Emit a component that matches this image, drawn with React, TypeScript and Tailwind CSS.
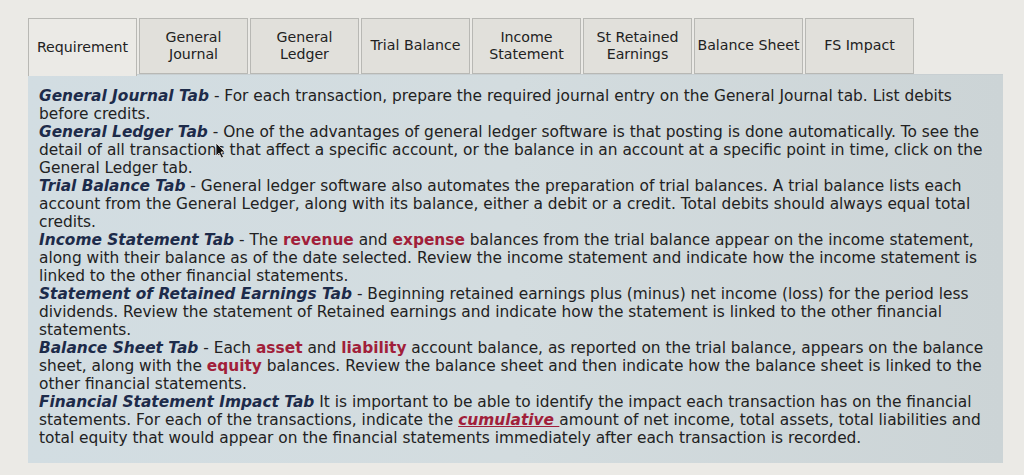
import React from "react";

const tabs: { label: React.ReactNode; active?: boolean }[] = [
  { label: "Requirement", active: true },
  { label: <>General<br />Journal</> },
  { label: <>General<br />Ledger</> },
  { label: "Trial Balance" },
  { label: <>Income<br />Statement</> },
  { label: <>St Retained<br />Earnings</> },
  { label: "Balance Sheet" },
  { label: "FS Impact" },
];

const H = ({ children }: { children: React.ReactNode }) => (
  <span className="font-bold italic text-[#1d2b4a]">{children}</span>
);
const R = ({ children }: { children: React.ReactNode }) => (
  <span className="font-bold text-[#a11f3a]">{children}</span>
);

export default function App() {
  return (
    <div
      className="w-[1024px] h-[475px] bg-[#ebeae6] overflow-hidden pt-[18px] pl-[28px]"
      style={{ fontFamily: '"DejaVu Sans", Verdana, sans-serif' }}
    >
      <div className="flex gap-[2px] relative z-10">
        {tabs.map((t, i) => (
          <div
            key={i}
            className={
              "w-[109px] flex items-center justify-center text-center text-[14.2px] leading-[17px] text-[#222] border border-[#b8b8b4] " +
              (t.active
                ? "h-[58px] bg-[#ebeae6] border-b-0"
                : "h-[56px] bg-[#e1e0db]")
            }
          >
            <span className="-mt-[1px]">{t.label}</span>
          </div>
        ))}
      </div>
      <div className="relative w-[975px] h-[389px] -mt-[2px] bg-gradient-to-r from-[#d2dde2] via-[#d3dcdf] to-[#ccd4d6] border-t border-[#c8cfd2] pl-[11px] pt-[12px] text-[15.4px] leading-[18px] text-[#222] whitespace-nowrap">
        <div>
          <H>General Journal Tab</H> - For each transaction, prepare the required journal entry on the General Journal tab. List debits
          <br />before credits.
        </div>
        <div>
          <H>General Ledger Tab</H> - One of the advantages of general ledger software is that posting is done automatically. To see the
          <br />detail of all transactions that affect a specific account, or the balance in an account at a specific point in time, click on the
          <br />General Ledger tab.
        </div>
        <div>
          <H>Trial Balance Tab</H> - General ledger software also automates the preparation of trial balances. A trial balance lists each
          <br />account from the General Ledger, along with its balance, either a debit or a credit. Total debits should always equal total
          <br />credits.
        </div>
        <div>
          <H>Income Statement Tab</H> - The <R>revenue</R> and <R>expense</R> balances from the trial balance appear on the income statement,
          <br />along with their balance as of the date selected. Review the income statement and indicate how the income statement is
          <br />linked to the other financial statements.
        </div>
        <div>
          <H>Statement of Retained Earnings Tab</H> - Beginning retained earnings plus (minus) net income (loss) for the period less
          <br />dividends. Review the statement of Retained earnings and indicate how the statement is linked to the other financial
          <br />statements.
        </div>
        <div>
          <H>Balance Sheet Tab</H> - Each <R>asset</R> and <R>liability</R> account balance, as reported on the trial balance, appears on the balance
          <br />sheet, along with the <R>equity</R> balances. Review the balance sheet and then indicate how the balance sheet is linked to the
          <br />other financial statements.
        </div>
        <div>
          <H>Financial Statement Impact Tab</H> It is important to be able to identify the impact each transaction has on the financial
          <br />statements. For each of the transactions, indicate the{" "}
          <span className="font-bold italic text-[#a11f3a] underline">cumulative </span>amount of net income, total assets, total liabilities and
          <br />total equity that would appear on the financial statements immediately after each transaction is recorded.
        </div>
        <svg
          className="absolute left-[187px] top-[67px]"
          width="11"
          height="17"
          viewBox="0 0 11 17"
        >
          <path d="M1 1 L1 14 L4 11 L6.5 16 L8.5 15 L6 10 L10 10 Z" fill="#111" stroke="#eee" strokeWidth="0.8" />
        </svg>
      </div>
    </div>
  );
}
